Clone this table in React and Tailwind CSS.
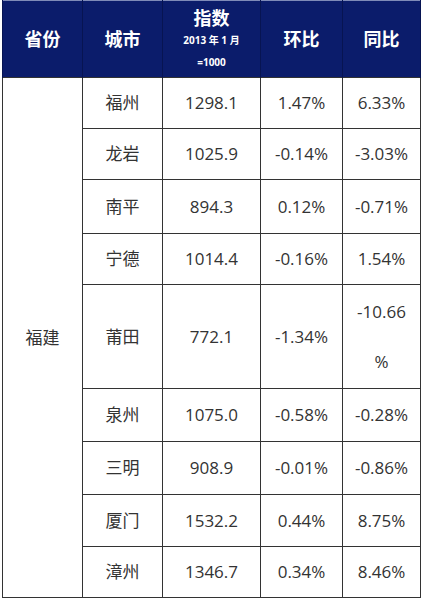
export default function App() {
  const rows = [
    ["福州", "1298.1", "1.47%", "6.33%", 51],
    ["龙岩", "1025.9", "-0.14%", "-3.03%", 51],
    ["南平", "894.3", "0.12%", "-0.71%", 54],
    ["宁德", "1014.4", "-0.16%", "1.54%", 51],
    ["莆田", "772.1", "-1.34%", null, 104],
    ["泉州", "1075.0", "-0.58%", "-0.28%", 53],
    ["三明", "908.9", "-0.01%", "-0.86%", 53],
    ["厦门", "1532.2", "0.44%", "8.75%", 52],
    ["漳州", "1346.7", "0.34%", "8.46%", 51],
  ];
  const font = { fontFamily: '"Open Sans", "Noto Sans CJK SC", sans-serif' };
  const td = "border-[1.5px] border-[#333333] text-center align-middle text-[17px] text-[#333333] p-0";
  const th = "border-x-[1.5px] border-[#071452] text-center align-middle text-white font-bold text-[18px] p-0";
  return (
    <div className="w-[422px] h-[600px] bg-white overflow-hidden" style={font}>
      <table className="ml-[2px] w-[418px] border-collapse table-fixed">
        <colgroup>
          <col className="w-[80px]" />
          <col className="w-[80px]" />
          <col className="w-[98px]" />
          <col className="w-[82px]" />
          <col className="w-[78px]" />
        </colgroup>
        <thead>
          <tr className="h-[77px] bg-[#0b1c6b] border-t border-[#7f8bb8]">
            <th className={th}>省份</th>
            <th className={th}>城市</th>
            <th className={th}>
              <div className="flex flex-col items-center">
                <span className="text-[18px] leading-[22px] -mt-[3px]">指数</span>
                <span className="text-[10px] leading-[12px] mt-[5px]">2013 年 1 月</span>
                <span className="text-[10px] leading-[12px] mt-[10px]">=1000</span>
              </div>
            </th>
            <th className={th}>环比</th>
            <th className={th}>同比</th>
          </tr>
        </thead>
        <tbody>
          {rows.map((r, i) => (
            <tr key={r[0]} style={{ height: r[4] }}>
              {i === 0 && (
                <td rowSpan={9} className={td}>福建</td>
              )}
              <td className={td}>{r[0]}</td>
              <td className={td}>{r[1]}</td>
              <td className={td}>{r[2]}</td>
              <td className={td}>
                {r[3] === null ? (
                  <div className="flex flex-col items-center leading-[50px]">
                    <span>-10.66</span>
                    <span>%</span>
                  </div>
                ) : (
                  r[3]
                )}
              </td>
            </tr>
          ))}
        </tbody>
      </table>
    </div>
  );
}
